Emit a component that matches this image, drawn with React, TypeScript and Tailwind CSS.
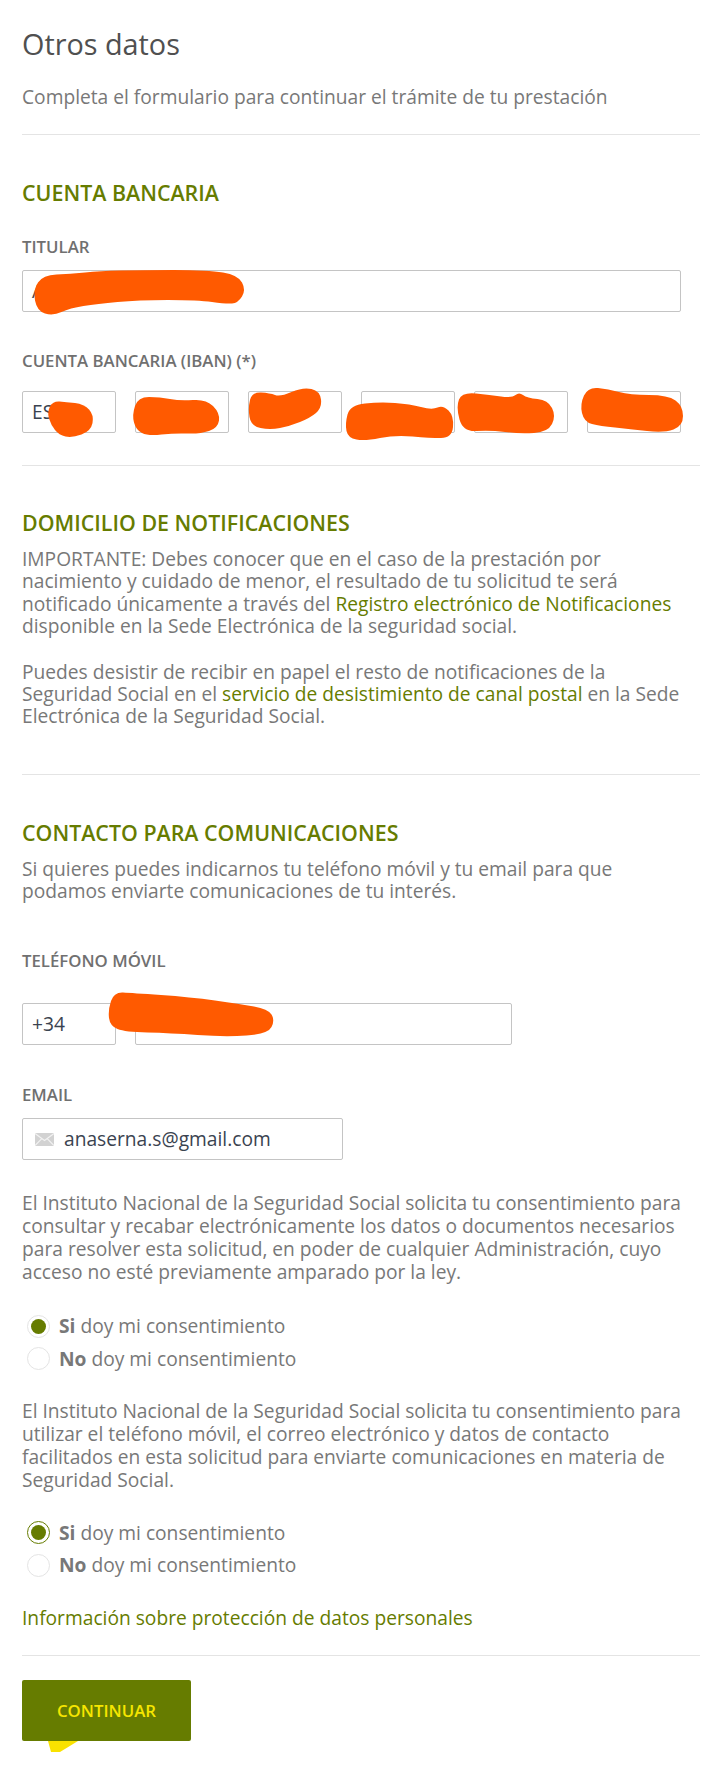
import React from "react";

type P = [number, number];
const smooth = (pts: P[]) => {
  const mid = (a: P, b: P): P => [(a[0] + b[0]) / 2, (a[1] + b[1]) / 2];
  const n = pts.length;
  const s = mid(pts[n - 1], pts[0]);
  let d = `M${s[0]} ${s[1]}`;
  pts.forEach((p, i) => {
    const m = mid(p, pts[(i + 1) % n]);
    d += ` Q${p[0]} ${p[1]} ${m[0]} ${m[1]}`;
  });
  return d + "Z";
};

const blobs: P[][] = [
  [[33, 290], [43, 275], [70, 274], [100, 271], [140, 270], [208, 270], [238, 275], [246, 290], [238, 303], [226, 304], [198, 300], [138, 300], [97, 304], [70, 308], [53, 316], [37, 311]],
  [[47, 412], [53, 401], [66, 402], [84, 404], [94, 415], [91, 431], [72, 438], [59, 435], [51, 425]],
  [[132, 415], [138, 397], [160, 397], [180, 401], [206, 399], [220, 413], [218, 428], [200, 434], [175, 433], [148, 436], [136, 430]],
  [[248, 408], [252, 392], [270, 393], [280, 397], [303, 387], [320, 391], [322, 408], [310, 418], [290, 426], [270, 430], [251, 426]],
  [[345, 424], [350, 405], [380, 402], [410, 404], [432, 410], [443, 405], [454, 416], [452, 438], [430, 438], [395, 435], [365, 441], [348, 438]],
  [[456, 407], [462, 392], [490, 395], [512, 398], [519, 392], [527, 398], [548, 400], [556, 416], [548, 432], [520, 434], [490, 430], [463, 432]],
  [[580, 404], [588, 387], [608, 389], [630, 395], [668, 395], [683, 406], [683, 426], [664, 433], [630, 429], [600, 426], [584, 422]],
  [[108, 1010], [114, 992], [132, 993], [190, 997], [240, 1004], [268, 1009], [275, 1020], [268, 1034], [225, 1037], [170, 1033], [125, 1032], [110, 1026]],
];

const Field = ({ className = "", children }: { className?: string; children?: React.ReactNode }) => (
  <div className={`h-[42px] pt-px border border-[#c4c4c4] rounded-[2px] bg-white flex items-center text-[19.2px] text-[#3a4350] ${className}`}>
    {children}
  </div>
);

const Label = ({ children, className = "" }: { children: React.ReactNode; className?: string }) => (
  <div className={`text-[16.8px] leading-[22px] font-semibold text-[#707070] ${className}`}>{children}</div>
);

const Heading = ({ children, className = "" }: { children: React.ReactNode; className?: string }) => (
  <h2 className={`text-[21.4px] leading-[28px] font-semibold text-[#667c00] ${className}`}>{children}</h2>
);

const Rule = ({ className = "" }: { className?: string }) => (
  <hr className={`w-[678px] border-0 h-px bg-[#e4e4e4] ${className}`} />
);

const Radio = ({ on, focus, bold }: { on?: boolean; focus?: boolean; bold: string }) => (
  <div className="h-[32.5px] flex items-center">
    <span className={`ml-[5px] w-[23px] h-[23px] rounded-full border flex items-center justify-center shrink-0 ${focus ? "border-[#667c00] border-[1.5px]" : "border-[#e4e4e4]"}`}>
      {on && <span className="w-[15px] h-[15px] rounded-full bg-[#667c00]" />}
    </span>
    <span className="ml-[9px] text-[19.2px] text-[#787878]">
      <b className="font-bold">{bold}</b> doy mi consentimiento
    </span>
  </div>
);

export default function App() {
  return (
    <div className="relative w-[721px] h-[1780px] bg-white overflow-hidden pl-[22px] font-['Open_Sans',sans-serif] text-[#787878]">
      <h1 className="pt-[26px] text-[28.8px] leading-[36px] font-normal text-[#505050]">Otros datos</h1>
      <p className="mt-[23px] text-[19.2px] leading-[24px]">Completa el formulario para continuar el trámite de tu prestación</p>
      <Rule className="mt-[25px]" />

      <Heading className="mt-[44px]">CUENTA BANCARIA</Heading>
      <Label className="mt-[29px]">TITULAR</Label>
      <Field className="mt-[12px] w-[659px] pl-[9px]">A</Field>
      <Label className="mt-[38px]">CUENTA BANCARIA (IBAN) (*)</Label>
      <div className="mt-[19px] w-[659px] grid grid-cols-6 gap-x-[19px]">
        <Field className="pl-[9px]">ES</Field>
        <Field />
        <Field />
        <Field />
        <Field />
        <Field />
      </div>
      <Rule className="mt-[32px]" />

      <Heading className="mt-[43px]">DOMICILIO DE NOTIFICACIONES</Heading>
      <div className="mt-[11px] w-[659px] text-[19.2px] leading-[22.4px]">
        <p>
          IMPORTANTE: Debes conocer que en el caso de la prestación por nacimiento y cuidado de menor, el resultado de tu solicitud te será notificado únicamente a través del <a className="text-[#667c00]">Registro electrónico de Notificaciones</a> disponible en la Sede Electrónica de la seguridad social.
        </p>
        <p className="mt-[23px]">
          Puedes desistir de recibir en papel el resto de notificaciones de la Seguridad Social en el <a className="text-[#667c00]">servicio de desistimiento de canal postal</a> en la Sede Electrónica de la Seguridad Social.
        </p>
      </div>
      <Rule className="mt-[46px]" />

      <Heading className="mt-[44px]">CONTACTO PARA COMUNICACIONES</Heading>
      <p className="mt-[11px] w-[659px] text-[19.2px] leading-[22.4px]">
        Si quieres puedes indicarnos tu teléfono móvil y tu email para que podamos enviarte comunicaciones de tu interés.
      </p>

      <Label className="mt-[47px]">TELÉFONO MÓVIL</Label>
      <div className="mt-[31px] flex gap-x-[19px]">
        <Field className="w-[94px] pl-[9px]">+34</Field>
        <Field className="w-[377px]" />
      </div>

      <Label className="mt-[39px]">EMAIL</Label>
      <Field className="mt-[12px] w-[321px] pl-[12px]">
        <svg width="19" height="13" viewBox="0 0 19 13" className="shrink-0">
          <rect width="19" height="13" fill="#d2d2d2" />
          <path d="M0 0.5 9.5 7.5 19 0.5M0 12.5 6.8 5.6M19 12.5 12.2 5.6" fill="none" stroke="#f2f2f2" strokeWidth="1.2" />
        </svg>
        <span className="ml-[10px]">anaserna.s@gmail.com</span>
      </Field>

      <p className="mt-[31px] w-[659px] text-[19.2px] leading-[23px]">
        El Instituto Nacional de la Seguridad Social solicita tu consentimiento para consultar y recabar electrónicamente los datos o documentos necesarios para resolver esta solicitud, en poder de cualquier Administración, cuyo acceso no esté previamente amparado por la ley.
      </p>
      <div className="mt-[27.5px]">
        <Radio on bold="Si" />
        <Radio bold="No" />
      </div>
      <p className="mt-[23.5px] w-[659px] text-[19.2px] leading-[23px]">
        El Instituto Nacional de la Seguridad Social solicita tu consentimiento para utilizar el teléfono móvil, el correo electrónico y datos de contacto facilitados en esta solicitud para enviarte comunicaciones en materia de Seguridad Social.
      </p>
      <div className="mt-[26px]">
        <Radio on focus bold="Si" />
        <Radio bold="No" />
      </div>
      <p className="mt-[24.5px] text-[19.2px] leading-[24px] text-[#667c00]">Información sobre protección de datos personales</p>
      <Rule className="mt-[25px]" />
      <button className="mt-[24px] block w-[169px] h-[61px] rounded-[2px] bg-[#667c00] text-[#f6e600] text-[16.8px] font-semibold">CONTINUAR</button>

      <svg width="721" height="1780" viewBox="0 0 721 1780" className="absolute left-0 top-0 pointer-events-none">
        {blobs.map((b, i) => (
          <path key={i} d={smooth(b)} fill="#ff5a00" />
        ))}
        <polygon points="48,1741 78,1741 60,1752 51,1752" fill="#f9e200" />
      </svg>
    </div>
  );
}
